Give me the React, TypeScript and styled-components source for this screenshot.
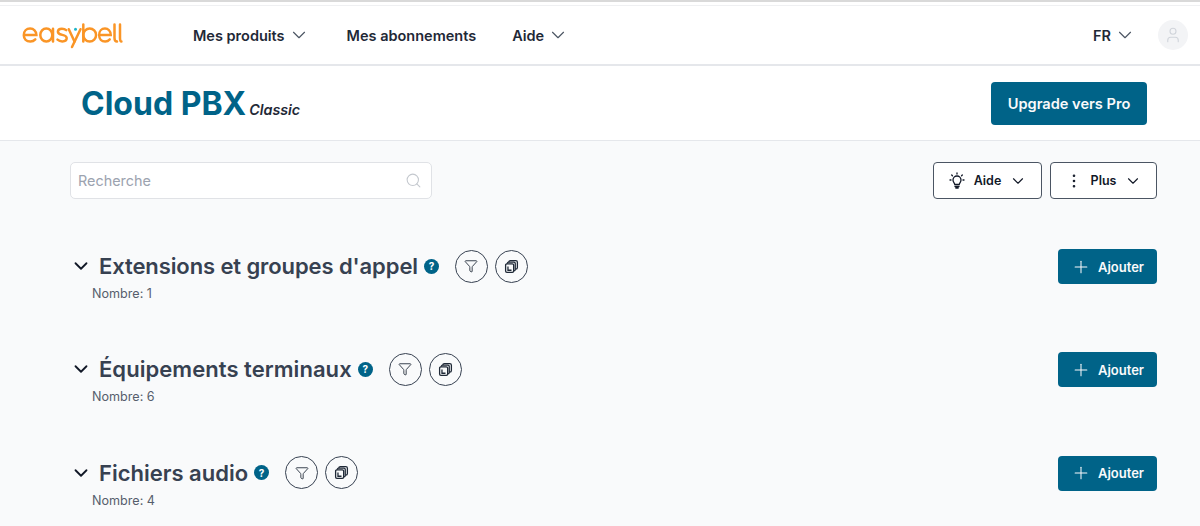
import React from 'react';
import styled, { createGlobalStyle } from 'styled-components';
import { ChevronDown, Search, Plus, User, EllipsisVertical, Funnel } from 'lucide-react';

const GlobalStyle = createGlobalStyle`
  html, body {
    margin: 0;
    padding: 0;
    background: #f9fafb;
    font-family: Inter, "Liberation Sans", sans-serif;
    overflow: hidden;
  }
`;

const Page = styled.div`
  width: 1200px;
  height: 526px;
  overflow: hidden;
  background: #f9fafb;
`;

const TopStrip = styled.div`
  box-sizing: border-box;
  height: 6px;
  background: #fff;
  border-top: 2px solid #d9d9d9;
  border-bottom: 1px solid #eff0f2;
`;

const Nav = styled.nav`
  display: flex;
  align-items: center;
  height: 58px;
  background: #fff;
  border-bottom: 2px solid #e5e7eb;
  padding-left: 21px;
  padding-right: 12px;
`;

const Logo = styled.div`
  display: flex;
  width: 102px;
  margin-right: 70px;
`;

const NavItem = styled.div<{ $gap?: number }>`
  display: flex;
  align-items: center;
  gap: 3px;
  margin-right: ${({ $gap }) => $gap ?? 0}px;
  font-size: 14.5px;
  font-weight: 600;
  color: #1f2937;
  svg {
    color: #4b5563;
  }
`;

const Spacer = styled.div`
  flex: 1;
`;

const Avatar = styled.div`
  width: 30px;
  height: 30px;
  border-radius: 50%;
  background: #f3f4f6;
  display: flex;
  align-items: center;
  justify-content: center;
  color: #d1d5db;
`;

const Header = styled.header`
  display: flex;
  align-items: center;
  justify-content: space-between;
  height: 74px;
  background: #fff;
  border-bottom: 1px solid #e5e7eb;
  padding: 0 53px 0 81px;
`;

const TitleRow = styled.div`
  display: flex;
  align-items: flex-end;
  gap: 3px;
`;

const Title = styled.h1`
  margin: 0;
  font-size: 32px;
  font-weight: 700;
  color: #006388;
`;

const Edition = styled.span`
  margin-bottom: 5px;
  font-size: 14.3px;
  font-weight: 600;
  font-style: italic;
  color: #1f2937;
`;

const UpgradeButton = styled.button`
  width: 156px;
  height: 43px;
  margin-top: 1px;
  border: none;
  border-radius: 4px;
  background: #006388;
  color: #f9fafb;
  font-family: inherit;
  font-size: 14.6px;
  font-weight: 600;
`;

const Content = styled.main`
  padding: 21px 43px 0 70px;
`;

const Toolbar = styled.div`
  display: flex;
  align-items: center;
  justify-content: space-between;
  margin-bottom: 50px;
`;

const SearchBox = styled.div`
  display: flex;
  align-items: center;
  justify-content: space-between;
  box-sizing: border-box;
  width: 362px;
  height: 37px;
  padding: 0 9px 0 7px;
  background: #fff;
  border: 1.5px solid #e0e2e6;
  border-radius: 5px;
  font-size: 14.4px;
  color: #9ca3af;
  svg {
    color: #c4c8ce;
  }
`;

const ToolbarActions = styled.div`
  display: flex;
  gap: 8px;
`;

const OutlineButton = styled.button<{ $width: number }>`
  display: flex;
  align-items: center;
  justify-content: center;
  gap: 8px;
  box-sizing: border-box;
  width: ${({ $width }) => $width}px;
  height: 37px;
  padding: 0;
  background: #fff;
  border: 1.5px solid #4b5563;
  border-radius: 4px;
  font-family: inherit;
  font-size: 12.5px;
  font-weight: 600;
  color: #111827;
`;

const SectionList = styled.div`
  display: flex;
  flex-direction: column;
  gap: 52.4px;
`;

const Section = styled.section`
  display: flex;
  align-items: flex-start;
  justify-content: space-between;
  height: 51px;
`;

const SectionMain = styled.div`
  display: flex;
  flex-direction: column;
`;

const SectionHead = styled.div`
  display: flex;
  align-items: center;
  height: 34px;
  svg.caret {
    color: #111827;
    margin-right: 7px;
  }
`;

const SectionTitle = styled.h2<{ $tracking: number }>`
  margin: 0;
  font-size: 22px;
  font-weight: 600;
  letter-spacing: ${({ $tracking }) => $tracking}px;
  color: #374151;
`;

const HelpDot = styled.span`
  display: flex;
  align-items: center;
  justify-content: center;
  width: 15px;
  height: 15px;
  margin: 0 16px 0 6px;
  border-radius: 50%;
  background: #006388;
  color: #fff;
  font-size: 10px;
  font-weight: 700;
`;

const CircleButton = styled.button`
  display: flex;
  align-items: center;
  justify-content: center;
  box-sizing: border-box;
  width: 33px;
  height: 33px;
  margin-right: 7px;
  padding: 0;
  background: transparent;
  border: 1.25px solid #374151;
  border-radius: 50%;
  color: #1f2937;
`;

const Count = styled.div`
  margin: 2px 0 0 22px;
  font-size: 12.6px;
  line-height: 18px;
  color: #565e6c;
`;

const AddButton = styled.button`
  display: flex;
  align-items: center;
  justify-content: center;
  gap: 7px;
  box-sizing: border-box;
  width: 99px;
  height: 35px;
  padding: 0;
  border: none;
  border-radius: 4px;
  background: #006388;
  color: #f9fafb;
  font-family: inherit;
  font-size: 13px;
  font-weight: 600;
`;

const LOGO_E = 'M2.8 13h12.6c0-4-2.8-6.4-6.3-6.4-3.7 0-6.3 2.7-6.3 6.6s2.6 6.3 6.5 6.3c2 0 3.7-.7 5-2.1';

function EasybellLogo() {
  return (
    <svg width="102" height="27" viewBox="0 0 102 27" fill="none" stroke="#fa9526" strokeWidth="2.5" strokeLinecap="round">
      <path d={LOGO_E} />
      <ellipse cx="25.3" cy="13" rx="6" ry="6.4" />
      <path d="M32 6.8V19.5" />
      <path d="M45.2 8.2c-1.1-1-2.5-1.5-4.3-1.5-2.4 0-4 1.1-4 3 0 4.3 8.8 2 8.8 6.3 0 2.1-1.8 3.4-4.4 3.4-1.8 0-3.5-.6-4.8-1.8" />
      <path d="M47.8 7.2L53.5 19.5" />
      <path d="M59.5 7.2L51 25" />
      <path d="M62.3 2.5V19.5" />
      <ellipse cx="68.7" cy="13" rx="6.4" ry="6.4" />
      <path d={LOGO_E} transform="translate(75.5 0) scale(.93 1)" />
      <path d="M93.5 2.5V16c0 2 .8 3.5 2.5 3.5" />
      <path d="M99 2.5V16c0 2 .4 3.5 1.4 3.5" />
      <circle cx="54.5" cy="7.3" r="1.5" fill="#1fb5c9" stroke="none" />
    </svg>
  );
}

// lightbulb with rays, the lucide one has none
function BulbIcon() {
  return (
    <svg width="18" height="18" viewBox="0 0 18 18" fill="none" stroke="currentColor" strokeWidth="1.3" strokeLinecap="round">
      <path d="M6.8 12.5c0-1.5-1.8-2.2-1.8-4.5a4 4 0 0 1 8 0c0 2.3-1.8 3-1.8 4.5z" />
      <path d="M7 14.5h4M7.8 16h2.4" />
      <path d="M9 1v1M3.7 3l.7.7M14.3 3l-.7.7M2 8h1M15 8h1" />
    </svg>
  );
}

// stacked copies icon, not in the icon packages in this shape
function CopyStack() {
  return (
    <svg width="15" height="15" viewBox="0 0 14 14" fill="none" stroke="currentColor" strokeWidth="1.2">
      <rect x="4.5" y="1.5" width="8" height="8" rx="1.5" />
      <rect x="3" y="3" width="7.5" height="8" rx="1.2" fill="#f9fafb" />
      <rect x="1.5" y="4.5" width="7.5" height="8" rx="1.2" fill="#f9fafb" />
      <path d="M3.7 7v3.5h3.3" />
    </svg>
  );
}

const sections = [
  { title: "Extensions et groupes d'appel", count: 1, tracking: -0.1 },
  { title: 'Équipements terminaux', count: 6, tracking: 0.05 },
  { title: 'Fichiers audio', count: 4, tracking: 0 },
];

export default function App() {
  return (
    <Page>
      <GlobalStyle />
      <TopStrip />
      <Nav>
        <Logo>
          <EasybellLogo />
        </Logo>
        <NavItem $gap={37}>
          Mes produits <ChevronDown size={22} strokeWidth={1.25} />
        </NavItem>
        <NavItem $gap={36}>Mes abonnements</NavItem>
        <NavItem>
          Aide <ChevronDown size={22} strokeWidth={1.25} />
        </NavItem>
        <Spacer />
        <NavItem $gap={22}>
          FR <ChevronDown size={22} strokeWidth={1.25} />
        </NavItem>
        <Avatar>
          <User size={18} strokeWidth={1.5} />
        </Avatar>
      </Nav>
      <Header>
        <TitleRow>
          <Title>Cloud PBX</Title>
          <Edition>Classic</Edition>
        </TitleRow>
        <UpgradeButton>Upgrade vers Pro</UpgradeButton>
      </Header>
      <Content>
        <Toolbar>
          <SearchBox>
            Recherche
            <Search size={17} strokeWidth={1.5} />
          </SearchBox>
          <ToolbarActions>
            <OutlineButton $width={109}>
              <BulbIcon /> Aide <ChevronDown size={18} strokeWidth={1.5} />
            </OutlineButton>
            <OutlineButton $width={107}>
              <EllipsisVertical size={18} strokeWidth={1.5} /> Plus <ChevronDown size={18} strokeWidth={1.5} />
            </OutlineButton>
          </ToolbarActions>
        </Toolbar>
        <SectionList>
          {sections.map((section) => (
            <Section key={section.title}>
              <SectionMain>
                <SectionHead>
                  <ChevronDown className="caret" size={22} strokeWidth={2} />
                  <SectionTitle $tracking={section.tracking}>{section.title}</SectionTitle>
                  <HelpDot>?</HelpDot>
                  <CircleButton>
                    <Funnel size={14} strokeWidth={1.5} />
                  </CircleButton>
                  <CircleButton>
                    <CopyStack />
                  </CircleButton>
                </SectionHead>
                <Count>Nombre: {section.count}</Count>
              </SectionMain>
              <AddButton>
                <Plus size={20} strokeWidth={1.25} /> Ajouter
              </AddButton>
            </Section>
          ))}
        </SectionList>
      </Content>
    </Page>
  );
}
